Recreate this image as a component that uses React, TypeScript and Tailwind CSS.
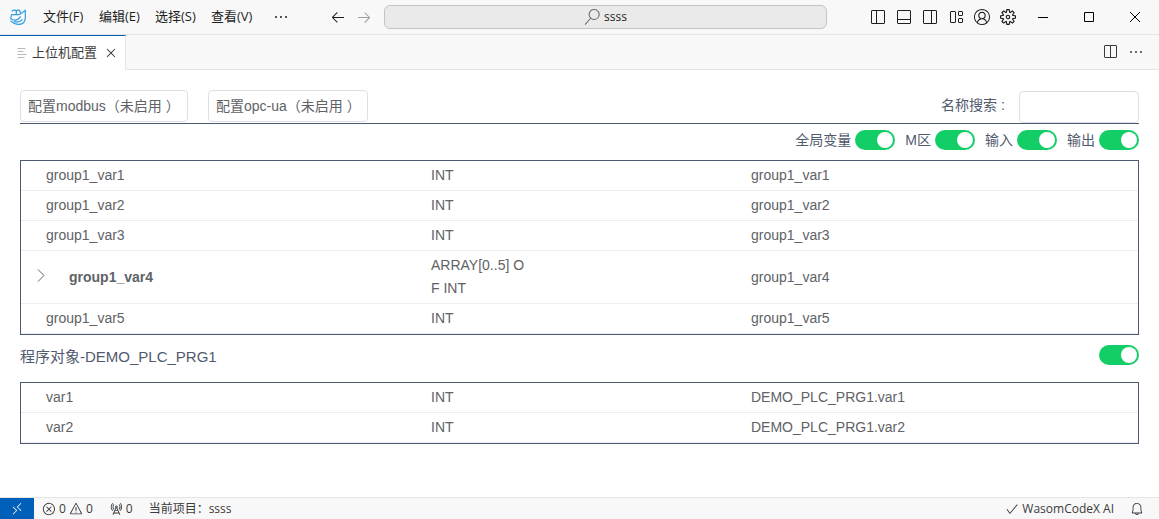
import type { ReactNode } from "react";
import {
  VscAccount,
  VscArrowLeft,
  VscArrowRight,
  VscBell,
  VscCheck,
  VscClose,
  VscEllipsis,
  VscError,
  VscLayout,
  VscLayoutPanelOff,
  VscLayoutSidebarLeftOff,
  VscLayoutSidebarRightOff,
  VscRadioTower,
  VscRemote,
  VscSearch,
  VscSettingsGear,
  VscSplitHorizontal,
  VscWarning,
} from "react-icons/vsc";

type Variable = { name: string; type: string; path: string; expandable?: boolean };

const globals: Variable[] = [
  { name: "group1_var1", type: "INT", path: "group1_var1" },
  { name: "group1_var2", type: "INT", path: "group1_var2" },
  { name: "group1_var3", type: "INT", path: "group1_var3" },
  { name: "group1_var4", type: "ARRAY[0..5] OF INT", path: "group1_var4", expandable: true },
  { name: "group1_var5", type: "INT", path: "group1_var5" },
];

const programVars: Variable[] = [
  { name: "var1", type: "INT", path: "DEMO_PLC_PRG1.var1" },
  { name: "var2", type: "INT", path: "DEMO_PLC_PRG1.var2" },
];

function Logo() {
  return (
    <svg viewBox="0 0 16 16" className="size-4" fill="none" stroke="#2f9fe0" strokeWidth="1.2" strokeLinejoin="round" strokeLinecap="round">
      <path d="M2.200 2.200C3 .7 5.600.7 6.300 2.200 7 .7 9.500.7 10.200 2.200M6.300 2.200v3" />
      <path d="M1.600 5.600h7.200c1.200 0 1.700-.5 2-1.400M10.800 4.200 9.900 2.800M11 4.600l4.300-3.400v8.200c-.4 3.400-2.800 5.800-6 6" />
      <path d="M1.600 5.600.7 9.800c1.700 1.300 4.600 1.600 7 .6 1.300-.6 2.100-1.500 2.600-2.600" />
      <path d="M.8 12.200c2.200 2.200 5.200 3.400 8.500 3.200M4.200 12.600c3.200.8 6 .2 8-1.800" />
    </svg>
  );
}

function IconButton({ label, className = "", children }: { label: string; className?: string; children: ReactNode }) {
  return (
    <button type="button" aria-label={label} className={`flex items-center justify-center ${className}`}>
      {children}
    </button>
  );
}

function Toggle({ label }: { label?: string }) {
  return (
    <input
      type="checkbox"
      role="switch"
      aria-label={label}
      defaultChecked
      className="flex h-5 w-10 appearance-none items-center rounded-full bg-[#c0c4cc] px-0.5 before:size-4 before:rounded-full before:bg-white checked:justify-end checked:bg-[#13ce66]"
    />
  );
}

function LabeledToggle({ label }: { label: string }) {
  return (
    <label className="flex items-center gap-1">
      {label}
      <Toggle />
    </label>
  );
}

function VariableTable({ rows, label }: { rows: Variable[]; label: string }) {
  return (
    <div className="border border-[#4e5873]">
      <table aria-label={label} className="w-full table-fixed border-separate border-spacing-0 text-sm leading-[23px] text-[#606266]">
        <colgroup>
          <col className="w-[398px]" />
          <col className="w-80" />
          <col />
        </colgroup>
        <tbody>
          {rows.map((row) => (
            <tr key={row.name}>
              <td className="border-b border-[#ebeef5] py-[3px] pr-3">
                {row.expandable ? (
                  <div className="flex items-center pl-3">
                    <IconButton label="展开" className="h-5 w-4">
                      <svg viewBox="0 0 16 16" className="size-4" fill="none" stroke="#606266" strokeWidth="1">
                        <path d="M5 .5 11 6.500 5 12.500" />
                      </svg>
                    </IconButton>
                    <b className="pl-5">{row.name}</b>
                  </div>
                ) : (
                  <span className="pl-[25px]">{row.name}</span>
                )}
              </td>
              <td className="border-b border-[#ebeef5] px-3 py-[3px]">
                <div className="max-w-24 break-all">{row.type}</div>
              </td>
              <td className="border-b border-[#ebeef5] px-3 py-[3px]">{row.path}</td>
            </tr>
          ))}
        </tbody>
      </table>
    </div>
  );
}

const menus = ["文件(F)", "编辑(E)", "选择(S)", "查看(V)"];

export default function App() {
  return (
    <div className="flex min-h-screen flex-col bg-white font-['Open_Sans','Noto_Sans_CJK_SC',sans-serif] text-[#3b3b3b]">
      <header className="grid h-[35px] grid-cols-[384fr_443fr_332fr] items-center border-b border-[#e5e5e5] bg-[#f8f8f8] text-[13px] text-[#1e1e1e]">
        <div className="flex items-center">
          <div className="pl-2.5 pr-[9px]">
            <Logo />
          </div>
          <nav className="flex items-center whitespace-nowrap">
            {menus.map((menu) => (
              <button key={menu} type="button" className="w-14 px-2 text-left">
                {menu}
              </button>
            ))}
            <IconButton label="更多菜单" className="ml-1.5 w-8">
              <VscEllipsis className="size-4" />
            </IconButton>
          </nav>
          <div className="ml-auto flex gap-2.5 pr-3">
            <IconButton label="后退">
              <VscArrowLeft className="size-4" />
            </IconButton>
            <IconButton label="前进" className="text-[#1e1e1e]/40">
              <VscArrowRight className="size-4" />
            </IconButton>
          </div>
        </div>
        <button type="button" className="flex h-6 items-center justify-center gap-1 rounded-md border border-[#c4c4c4] bg-[#eaeaea] text-xs">
          <VscSearch className="size-4 text-[#6b6b6b]" />
          ssss
        </button>
        <div className="flex items-center justify-end pr-px">
          <div className="flex gap-2.5 pr-1">
            <IconButton label="切换主侧栏"><VscLayoutSidebarLeftOff className="size-4" /></IconButton>
            <IconButton label="切换面板"><VscLayoutPanelOff className="size-4" /></IconButton>
            <IconButton label="切换辅助侧栏"><VscLayoutSidebarRightOff className="size-4" /></IconButton>
            <IconButton label="自定义布局"><VscLayout className="size-4" /></IconButton>
            <IconButton label="帐户"><VscAccount className="size-4" /></IconButton>
            <IconButton label="管理"><VscSettingsGear className="size-4" /></IconButton>
          </div>
          <div className="flex">
            <IconButton label="最小化" className="w-[46px]">
              <svg viewBox="0 0 10 10" className="size-2.5" stroke="#000"><path d="M0 5.500h10" /></svg>
            </IconButton>
            <IconButton label="最大化" className="w-[46px]">
              <svg viewBox="0 0 10 10" className="size-2.5" fill="none" stroke="#000"><path d="M.5.500h9v9h-9z" /></svg>
            </IconButton>
            <IconButton label="关闭" className="w-[46px]">
              <svg viewBox="0 0 10 10" className="size-2.5" stroke="#000"><path d="m0 0 10 10M10 0 0 10" /></svg>
            </IconButton>
          </div>
        </div>
      </header>

      <div className="flex h-[35px] bg-[#f8f8f8] text-[13px]">
        <div className="flex items-center border-r border-t border-r-[#e5e5e5] border-t-[#005fb8] bg-white pl-4 pr-1.5">
          <svg viewBox="0 0 12 12" className="size-3" stroke="#b9b9b9">
            <path d="M1.500 1.500h8M1.500 4.500h6M1.500 7.500h9M1.500 10.500h7" />
          </svg>
          <span className="pl-1">上位机配置</span>
          <IconButton label="关闭标签" className="ml-1.5 size-4">
            <VscClose className="size-4" />
          </IconButton>
        </div>
        <div className="flex flex-1 items-center justify-end gap-2.5 border-b border-[#e5e5e5] pr-[15px]">
          <IconButton label="拆分编辑器"><VscSplitHorizontal className="size-4" /></IconButton>
          <IconButton label="更多操作"><VscEllipsis className="size-4" /></IconButton>
        </div>
      </div>

      <main className="flex-1 px-5 pt-5 font-['Liberation_Sans','Noto_Sans_CJK_SC',sans-serif] text-sm text-[#515a6e]">
        <div className="flex h-[34px] items-start gap-5 border-b border-[#4e5873]">
          <button type="button" className="h-8 w-[168px] whitespace-nowrap rounded border border-[#dcdfe6] px-[7px] text-left text-[#606266]">
            配置modbus（未启用 ）
          </button>
          <button type="button" className="h-8 w-40 whitespace-nowrap rounded border border-[#dcdfe6] px-[7px] text-left text-[#606266]">
            配置opc-ua（未启用 ）
          </button>
          <label className="ml-auto flex items-start self-end">
            <span className="w-[78px] leading-7">名称搜索 :</span>
            <input type="text" className="h-8 w-[120px] rounded border border-[#dcdfe6] bg-white px-2" />
          </label>
        </div>
        <div className="flex h-9 items-center justify-end gap-2.5 pb-1">
          <LabeledToggle label="全局变量" />
          <LabeledToggle label="M区" />
          <LabeledToggle label="输入" />
          <LabeledToggle label="输出" />
        </div>
        <VariableTable rows={globals} label="全局变量" />
        <div className="flex h-[47px] items-start justify-between pt-2.5">
          <h2 className="text-[15px] leading-6">程序对象-DEMO_PLC_PRG1</h2>
          <Toggle label="程序对象-DEMO_PLC_PRG1" />
        </div>
        <VariableTable rows={programVars} label="程序对象-DEMO_PLC_PRG1" />
      </main>

      <footer className="flex h-[22px] items-center border-t border-[#e5e5e5] bg-[#f8f8f8] text-xs">
        <IconButton label="远程窗口" className="h-full w-[34px] bg-[#005fb8] text-white">
          <VscRemote className="size-3.5" />
        </IconButton>
        <button type="button" className="ml-2 flex items-center gap-[3px]">
          <VscError className="size-3.5" />0
          <VscWarning className="size-3.5" />0
        </button>
        <button type="button" className="ml-4 flex items-center gap-[3px]">
          <VscRadioTower className="size-3.5" />0
        </button>
        <span className="ml-4">当前项目：ssss</span>
        <button type="button" className="ml-auto flex items-center gap-[3px]">
          <VscCheck className="size-3.5" />
          WasomCodeX AI
        </button>
        <IconButton label="通知" className="ml-4 mr-[15px]">
          <VscBell className="size-3.5" />
        </IconButton>
      </footer>
    </div>
  );
}
